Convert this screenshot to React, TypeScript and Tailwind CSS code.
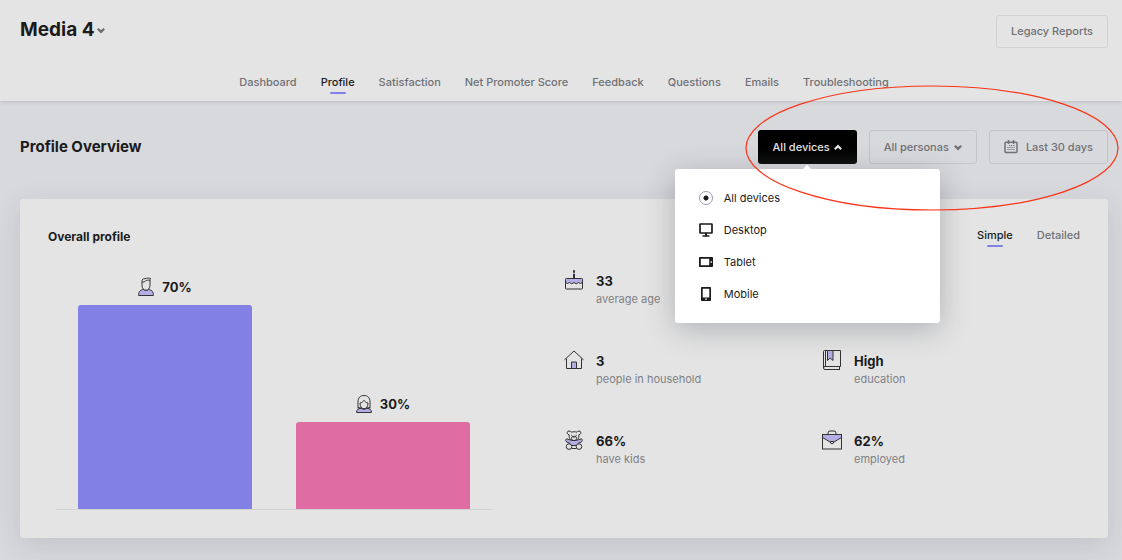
import React, { useState } from "react"
import clsx from "clsx"

const NAV = [
  "Dashboard",
  "Profile",
  "Satisfaction",
  "Net Promoter Score",
  "Feedback",
  "Questions",
  "Emails",
  "Troubleshooting",
]

function Chevron({ up = false }: { up?: boolean }) {
  return (
    <svg width="8" height="7" viewBox="0 0 8 7" fill="none" stroke="currentColor" strokeWidth="2.2" aria-hidden="true">
      <path d={up ? "M.8 5.3 4 2.1 7.200 5.3" : "M.8 1.7 4 4.900 7.200 1.7"} />
    </svg>
  )
}

function CalendarIcon() {
  return (
    <svg width="14" height="14" viewBox="0 0 14 14" fill="none" stroke="currentColor" aria-hidden="true">
      <rect x="1" y="2.2" width="12" height="10.300" rx="1" strokeWidth="1.500" />
      <path d="M4.500 0v4M9.500 0v4" strokeWidth="1.500" />
      <path d="M7.100 5.500h1.200M9.400 5.500h1.200M3.400 7.500h1.200M5.400 7.500h1.200M7.400 7.500h1.200M9.400 7.500h1.200M3.400 9.500h1.200M5.400 9.500h1.200M7.400 9.500h1.200M9.400 9.500h1.200M5.100 5.500h1.200" strokeWidth="1.200" />
    </svg>
  )
}

function DesktopIcon() {
  return (
    <svg width="14" height="14" viewBox="0 0 14 14" aria-hidden="true">
      <rect x="1" y="1" width="12" height="9" rx=".3" fill="none" stroke="#1b1b1c" strokeWidth="1.700" />
      <path d="M6 10h2v2.300h2.500v1.400h-7v-1.400H6z" fill="#1b1b1c" />
    </svg>
  )
}

function TabletIcon() {
  return (
    <svg width="14" height="14" viewBox="0 0 14 14" aria-hidden="true">
      <path
        fillRule="evenodd"
        d="M.8 2h12.400q.8 0 .8.8v8.400q0 .8-.8.8H.8q-.8 0-.8-.8V2.800Q0 2 .8 2zM1.800 3.800v6.400h8.400V3.800zM11.500 6.300v1.400h1.400V6.300z"
        fill="#1b1b1c"
      />
    </svg>
  )
}

function MobileIcon() {
  return (
    <svg width="14" height="14" viewBox="0 0 14 14" aria-hidden="true">
      <path
        fillRule="evenodd"
        d="M2.700 0h8.600q.7 0 .7.7v12.600q0 .7-.7.7H2.700q-.7 0-.7-.7V.7q0-.7.7-.7zM3.700 1.700v8.700h6.600V1.700zM6.300 11.500v1.400h1.400v-1.400z"
        fill="#1b1b1c"
      />
    </svg>
  )
}

function ManIcon() {
  return (
    <svg width="16" height="20" viewBox="0 0 16 20" fill="none" stroke="#333" aria-hidden="true">
      <path d="M.6 18.500c0-3.500 1.200-5.500 4.900-6 1.500 1 3.500 1 5 0 3.700.5 4.900 2.500 4.900 6z" fill="#b3aee6" />
      <path
        d="M4 4.500C3.800 2.300 5.300 1.500 7 1.800c1.500-.9 4-.8 5.500-.3-.6.700-.5 1.500-.5 2.500v4.500c0 2.700-1.700 4.700-4 4.700s-4-2-4-4.700z"
        fill="#e4e4e4"
      />
      <path d="M4 5c1.500.3 2.500-.1 3.500-1s2.500-.9 4.500-.7" />
    </svg>
  )
}

function WomanIcon() {
  return (
    <svg width="16" height="20" viewBox="0 0 16 20" fill="none" stroke="#333" aria-hidden="true">
      <path d="M2 14.500V8c0-4.300 2.200-6.500 6-6.500S14 3.700 14 8v6.500" />
      <path d="M.6 18.500c0-2.700 1.300-4 4.400-4.200 2 1.300 4 1.300 6 0 3.100.2 4.400 1.500 4.400 4.200z" fill="#b3aee6" />
      <path d="M4 9c1.700-.2 3.200-1.200 4-2.700 1 1.500 2.300 2.500 4 2.700 0 3.500-1.500 5.700-4 5.700S4 12.500 4 9zM2 13.500l3 .5M14 13.500l-3 .5" />
    </svg>
  )
}

function CakeIcon() {
  return (
    <svg width="20" height="20" viewBox="0 0 20 20" fill="none" stroke="#333" aria-hidden="true">
      <path d="M1.500 8.500h17v4l-2 1-2-1-2.300 1.300-2.200-1.300-2.200 1.300-2.300-1.300-2 1-2-1z" fill="#b3aee6" stroke="none" />
      <path d="M1.500 12.500l2 1 2-1 2.300 1.300 2.200-1.300 2.200 1.300 2.300-1.300 2 1 2-1" />
      <rect x="1.500" y="8.500" width="17" height="10.500" rx=".8" />
      <path d="M10 3.800v4.700M10 .3v2.400" strokeWidth="2" />
    </svg>
  )
}

function HouseIcon() {
  return (
    <svg width="20" height="20" viewBox="0 0 20 20" fill="none" stroke="#333" aria-hidden="true">
      <path d="M.5 9.800 10 1l9.500 8.800M2.500 8.500v10h15v-10" />
      <path d="M7.500 18.500v-6.500h5v6.500z" fill="#b3aee6" />
    </svg>
  )
}

function BearIcon() {
  return (
    <svg width="20" height="20" viewBox="0 0 20 20" fill="none" stroke="#333" aria-hidden="true">
      <path d="M6 10 2.500 8.800C1.300 9.800 1.500 11.500 2.800 12l3 1.200-.8 2.300h10l-.8-2.300 3-1.200c1.300-.5 1.500-2.200.3-3.200L14 10z" fill="#b3aee6" />
      <path
        d="M5.200 4.800C2.500 4.500 2.500 1 5 1c1 0 1.700.5 2 1.200 2-.6 4-.6 6 0 .3-.7 1-1.200 2-1.200 2.500 0 2.500 3.500-.2 3.800.4 3.500-1 5.800-4.800 5.800S4.800 8.300 5.200 4.800z"
        fill="#e4e4e4"
      />
      <ellipse cx="10" cy="8.400" rx="2.600" ry="2.200" />
      <circle cx="5" cy="16.600" r="2.800" fill="#e4e4e4" />
      <circle cx="15" cy="16.600" r="2.800" fill="#e4e4e4" />
      <path d="M7.500 18.500h5M7.300 5.300h1M11.700 5.300h1M9.500 7.500h1" />
    </svg>
  )
}

function BookIcon() {
  return (
    <svg width="20" height="20" viewBox="0 0 20 20" fill="none" stroke="#333" aria-hidden="true">
      <path d="M18.500 16.500V.5H2.500q-1 0-1 1v16.500q0 1.500 1.500 1.500h15M18.500 16.500H3q-1.500 0-1.500 1.500M3.500.5v16M17.500 16.500v3" />
      <path d="M5.500.5v10l2.700-2.500 2.800 2.500V.5z" fill="#b3aee6" />
    </svg>
  )
}

function BriefcaseIcon() {
  return (
    <svg width="20" height="20" viewBox="0 0 20 20" fill="none" stroke="#333" aria-hidden="true">
      <path d="M.5 4.500h19V7.500L12 12H8L.5 7.500z" fill="#b3aee6" />
      <rect x=".5" y="4.500" width="19" height="14.500" />
      <path d="M6 4.500V3q0-2 2-2h4q2 0 2 2v1.500" />
      <path d="M8.500 11.500h3v1.500q-1.500 1.800-3 0z" fill="#e4e4e4" />
    </svg>
  )
}

const DEVICES = [
  { label: "All devices", icon: null },
  { label: "Desktop", icon: <DesktopIcon /> },
  { label: "Tablet", icon: <TabletIcon /> },
  { label: "Mobile", icon: <MobileIcon /> },
]

const GENDERS = [
  { name: "men", percent: 70, icon: <ManIcon />, color: "bg-[#8380e5]" },
  { name: "women", percent: 30, icon: <WomanIcon />, color: "bg-[#df6da4]" },
]

function Header() {
  return (
    <header className="bg-[#e4e4e4] pl-5 pr-[14px] pt-[15px] shadow-[0_1px_4px_rgba(0,0,0,0.12)]">
      <div className="flex items-start justify-between">
        <button className="flex items-center gap-0.5 text-[19px] leading-[30px] font-bold text-[#1b1b1c]">
          Media 4
          <span className="text-[#6b6c70]">
            <Chevron />
          </span>
        </button>
        <button className="h-[33px] rounded-[3px] border border-[#d0d1d5] px-[14px] text-[11px] font-medium text-[#707176]">
          Legacy Reports
        </button>
      </div>
      <nav className="mt-[26px] flex justify-center gap-6 text-[11px] leading-4 font-medium">
        {NAV.map((item) => (
          <Tab key={item} label={item} active={item === "Profile"} />
        ))}
      </nav>
    </header>
  )
}

function Tab({ label, active }: { label: string; active: boolean }) {
  return (
    <a
      href="#"
      className={clsx("flex flex-col items-center gap-0.5 pb-[7px]", active ? "text-[#1b1b1c]" : "text-[#707176]")}
    >
      {label}
      <span className={clsx("h-0.5 w-4 rounded-full", active && "bg-[#8380e5]")} />
    </a>
  )
}

function DeviceMenu() {
  const [device, setDevice] = useState("All devices")

  return (
    <div className="absolute top-full -right-[83px] z-10 mt-[5px] w-[265px] rounded-[3px] bg-white px-6 py-[13px] shadow-[0_6px_30px_rgba(40,45,60,0.28)]">
      <svg className="absolute -top-1 left-1/2 -ml-[5px]" width="10" height="5" viewBox="0 0 10 5" aria-hidden="true">
        <path d="M0 5 5 0l5 5z" fill="#fff" />
      </svg>
      {DEVICES.map(({ label, icon }) => (
        <label key={label} className="flex h-8 items-center gap-[11px] text-[11px] font-normal text-[#1b1b1c]">
          <input
            type="radio"
            name="device"
            checked={device === label}
            onChange={() => setDevice(label)}
            className={
              icon
                ? "sr-only"
                : "size-[14px] appearance-none rounded-full border border-[#9a9cad] checked:bg-[radial-gradient(circle,#1b1b1c_2px,#fff_3px)]"
            }
          />
          {icon}
          {label}
        </label>
      ))}
    </div>
  )
}

function Toolbar() {
  return (
    <div className="relative flex items-center justify-between">
      <h1 className="text-[15px] leading-5 font-bold text-[#1b1b1c]">Profile Overview</h1>
      <div className="flex gap-3 text-[11px] font-medium text-[#707176]">
        <div className="relative">
          <button className="flex h-[34px] items-center gap-1 rounded-[3px] bg-gradient-to-b from-black to-[#101010] px-[15px] text-[#e4e4e4]">
            All devices
            <Chevron up />
          </button>
          <DeviceMenu />
        </div>
        <button className="flex h-[34px] items-center gap-[5px] rounded-[3px] border border-[#c3c5cd] px-[14px]">
          All personas
          <Chevron />
        </button>
        <button className="flex h-[34px] items-center gap-2 rounded-[3px] border border-[#c3c5cd] px-[14px]">
          <CalendarIcon />
          Last 30 days
        </button>
      </div>
      {/* hand-drawn highlight around the filters */}
      <svg
        className="pointer-events-none absolute -top-[45px] -right-[11px] z-20"
        width="374"
        height="126"
        viewBox="0 0 374 126"
        fill="none"
        aria-hidden="true"
      >
        <ellipse cx="187" cy="63" rx="186" ry="62" stroke="#fa3418" strokeWidth="1.200" />
      </svg>
    </div>
  )
}

function GenderChart() {
  return (
    <div className="ml-2 flex h-[292px] w-[436px] items-end border-b border-[#d2d2d3]">
      {GENDERS.map(({ name, percent, icon, color }) => (
        <div key={name} className="flex h-full flex-1 flex-col justify-end px-[22px]">
          <div className="mb-2 flex items-center justify-center gap-2 text-[13px] leading-5 font-bold text-[#1b1b1c]">
            {icon}
            {percent}%
          </div>
          <div className={clsx("shrink-0 rounded-t-[3px]", color)} style={{ height: `${percent}%` }} />
        </div>
      ))}
    </div>
  )
}

function Stat({
  icon,
  value,
  label,
  className,
}: {
  icon: React.ReactNode
  value: string
  label: string
  className?: string
}) {
  return (
    <div className={clsx("flex h-20 items-start gap-3", className)}>
      {icon}
      <div className="pt-0.5">
        <div className="text-[13px] leading-[18px] font-bold text-[#1b1b1c]">{value}</div>
        <div className="text-[11px] leading-[18px] text-[#808186]">{label}</div>
      </div>
    </div>
  )
}

export default function App() {
  return (
    <div className="min-h-screen bg-[#d8d9dd] font-['Inter','Liberation_Sans',sans-serif]">
      <Header />
      <main className="pt-[29px] pr-[14px] pb-[22px] pl-5">
        <Toolbar />
        <section className="mt-[35px] rounded-[3px] bg-[#e4e4e4] px-7 pt-7 pb-7 shadow-[0_8px_30px_rgba(40,45,60,0.12)]">
          <div className="flex h-[22px] items-start justify-between">
            <h2 className="text-[12px] leading-5 font-bold text-[#1b1b1c]">Overall profile</h2>
            <div className="flex gap-6 text-[11px] leading-4 font-medium">
              <Tab label="Simple" active />
              <Tab label="Detailed" active={false} />
            </div>
          </div>
          <div className="-mt-[31px] grid grid-cols-2">
            <GenderChart />
            <div className="grid grid-cols-2 content-start pt-[52px]">
              <Stat className="col-span-2" icon={<CakeIcon />} value="33" label="average age" />
              <Stat icon={<HouseIcon />} value="3" label="people in household" />
              <Stat icon={<BookIcon />} value="High" label="education" />
              <Stat icon={<BearIcon />} value="66%" label="have kids" />
              <Stat icon={<BriefcaseIcon />} value="62%" label="employed" />
            </div>
          </div>
        </section>
      </main>
    </div>
  )
}
